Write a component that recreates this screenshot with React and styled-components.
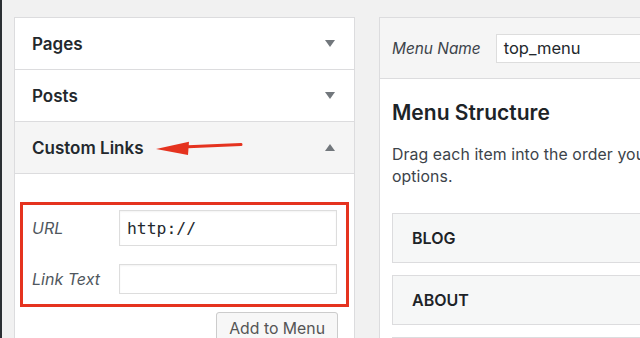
import React from 'react';
import styled, { createGlobalStyle } from 'styled-components';

const Global = createGlobalStyle`
  html, body { margin: 0; padding: 0; }
  body {
    background: #f1f1f1;
    font-family: Inter, "Noto Sans", "Liberation Sans", sans-serif;
    color: #23282d;
    overflow: hidden;
  }
`;

const Page = styled.div`
  display: flex;
  gap: 24px;
  width: 640px;
  height: 338px;
  box-sizing: border-box;
  border-left: 2px solid #2b2f33;
  padding: 17px 0 0 12px;
  overflow: hidden;
`;

const Side = styled.div`
  width: 341px;
  flex: none;
  background: #fff;
  border: 1px solid #dcdcde;
  box-sizing: border-box;
  align-self: flex-start;
`;

const Section = styled.div`
  border-bottom: 1px solid #dcdcde;
  &:last-child { border-bottom: none; }
`;

const SectionHead = styled.div`
  height: 51px;
  display: flex;
  align-items: center;
  justify-content: space-between;
  padding: 0 19px 0 17px;
  background: ${p => (p.open ? '#f5f5f5' : '#fff')};
  border-bottom: ${p => (p.open ? '1px solid #dcdcde' : 'none')};
  font-size: 17px;
  font-weight: 600;
  color: #23282d;
`;

const Toggle = styled.span`
  width: 0;
  height: 0;
  border-left: 5px solid transparent;
  border-right: 5px solid transparent;
  ${p => (p.up ? 'border-bottom: 7px solid #72777c;' : 'border-top: 7px solid #72777c;')}
`;

const SectionBody = styled.div`
  padding: 28px 5px 0 5px;
  display: flex;
  flex-direction: column;
  align-items: stretch;
`;

const Highlight = styled.div`
  border: 3px solid #e5331f;
  padding: 5px 9px 10px 9px;
  display: flex;
  flex-direction: column;
  gap: 18px;
`;

const FieldRow = styled.div`
  display: flex;
  align-items: center;
`;

const Label = styled.label`
  width: 87px;
  font-size: 16px;
  font-style: italic;
  color: #50575e;
`;

const Input = styled.div`
  flex: 1;
  height: ${p => p.h}px;
  box-sizing: border-box;
  border: 1px solid #ddd;
  box-shadow: inset 0 1px 2px rgba(0,0,0,0.05);
  background: #fff;
  display: flex;
  align-items: center;
  padding-left: 7px;
  font-family: ${p => (p.mono ? '"DejaVu Sans Mono", "Liberation Mono", monospace' : 'inherit')};
  font-size: 16.4px;
  color: #23282d;
`;

const Actions = styled.div`
  display: flex;
  justify-content: flex-end;
  padding: 5px 11px 0 0;
`;

const Button = styled.button`
  height: 32px;
  padding: 0 12px;
  border: 1px solid #ccc;
  border-radius: 3px;
  background: #f7f7f7;
  box-shadow: 0 1px 0 #ccc;
  font-family: inherit;
  font-size: 15.8px;
  color: #555;
`;

const Main = styled.div`
  flex: 1;
  min-width: 300px;
  background: #fff;
  border: 1px solid #dcdcde;
  border-right: none;
  align-self: flex-start;
`;

const MainHead = styled.div`
  height: 60px;
  background: #f5f5f5;
  border-bottom: 1px solid #dcdcde;
  display: flex;
  align-items: center;
  padding-left: 12px;
  gap: 15px;
`;

const NameLabel = styled.span`
  font-size: 15.4px;
  font-style: italic;
  color: #3c434a;
`;

const NameInput = styled.div`
  flex: 1;
  height: 29px;
  box-sizing: border-box;
  border: 1px solid #ddd;
  border-right: none;
  background: #fff;
  display: flex;
  align-items: center;
  padding-left: 7px;
  font-size: 16.5px;
  color: #23282d;
`;

const MainBody = styled.div`
  padding: 21px 0 0 12px;
`;

const Title = styled.h2`
  margin: 0;
  font-size: 21px;
  font-weight: 600;
  line-height: 26px;
  color: #1d2327;
`;

const Lead = styled.p`
  margin: 18px 0 0;
  font-size: 15.8px;
  letter-spacing: 0.1px;
  line-height: 22px;
  color: #3c434a;
  white-space: nowrap;
`;

const Items = styled.div`
  margin-top: 25px;
  display: flex;
  flex-direction: column;
  gap: 12px;
`;

const Item = styled.div`
  height: 50px;
  box-sizing: border-box;
  border: 1px solid #dcdcde;
  border-right: none;
  background: #f6f7f7;
  display: flex;
  align-items: center;
  padding-left: 19px;
  font-size: 16px;
  font-weight: 600;
  color: #1d2327;
`;

const Head = styled.span`
  display: flex;
  align-items: center;
`;

const Arrow = () => (
  <svg width="90" height="16" viewBox="0 0 90 16" style={{ marginLeft: 11 }}>
    <path d="M33 6.8 L86 4.6" stroke="#e5331f" strokeWidth="3" strokeLinecap="round" fill="none" />
    <path d="M1 9 L34 1.8 L33 15 Z" fill="#e5331f" />
  </svg>
);

export default function App() {
  return (
    <>
      <Global />
      <Page>
        <Side>
          <Section>
            <SectionHead>Pages<Toggle /></SectionHead>
          </Section>
          <Section>
            <SectionHead>Posts<Toggle /></SectionHead>
          </Section>
          <Section>
            <SectionHead open>
              <Head>Custom Links<Arrow /></Head>
              <Toggle up />
            </SectionHead>
            <SectionBody>
              <Highlight>
                <FieldRow>
                  <Label>URL</Label>
                  <Input h={36} mono>http://</Input>
                </FieldRow>
                <FieldRow>
                  <Label>Link Text</Label>
                  <Input h={30} />
                </FieldRow>
              </Highlight>
              <Actions>
                <Button>Add to Menu</Button>
              </Actions>
            </SectionBody>
          </Section>
        </Side>
        <Main>
          <MainHead>
            <NameLabel>Menu Name</NameLabel>
            <NameInput>top_menu</NameInput>
          </MainHead>
          <MainBody>
            <Title>Menu Structure</Title>
            <Lead>
              Drag each item into the order you prefer. Click the arrow on the right of the item to reveal additional configuration
              <br />
              options.
            </Lead>
            <Items>
              <Item>BLOG</Item>
              <Item>ABOUT</Item>
              <Item>CONTACT</Item>
            </Items>
          </MainBody>
        </Main>
      </Page>
    </>
  );
}
